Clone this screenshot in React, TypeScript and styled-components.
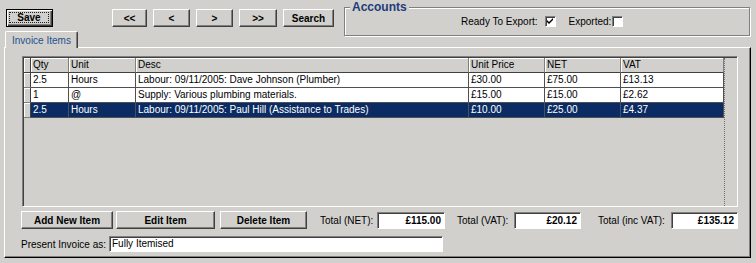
import styled, { createGlobalStyle } from 'styled-components';

const FACE = '#d1d0cd';
const FONT = '"Liberation Sans", Arial, sans-serif';

const GlobalStyle = createGlobalStyle`
  html, body {
    margin: 0;
    padding: 0;
    background: ${FACE};
  }
  body {
    font-family: ${FONT};
    font-size: 10px;
    color: #000;
  }
`;

type Item = {
  qty: string;
  unit: string;
  desc: string;
  price: string;
  net: string;
  vat: string;
};

const items: Item[] = [
  { qty: '2.5', unit: 'Hours', desc: 'Labour: 09/11/2005: Dave Johnson (Plumber)', price: '£30.00', net: '£75.00', vat: '£13.13' },
  { qty: '1', unit: '@', desc: 'Supply: Various plumbing materials.', price: '£15.00', net: '£15.00', vat: '£2.62' },
  { qty: '2.5', unit: 'Hours', desc: 'Labour: 09/11/2005: Paul Hill (Assistance to Trades)', price: '£10.00', net: '£25.00', vat: '£4.37' },
];

const COLS = '7px 38px 67px 333px 76px 76px 103px';

export default function App() {
  return (
    <Screen>
      <GlobalStyle />
      <TopBar>
        <SaveButton $w={47}>
          <FocusRect>Save</FocusRect>
        </SaveButton>
        <NavGroup>
          <Button $w={35}>&lt;&lt;</Button>
          <Button $w={37}>&lt;</Button>
          <Button $w={37}>&gt;</Button>
          <Button $w={38}>&gt;&gt;</Button>
          <Button $w={51}>Search</Button>
        </NavGroup>
        <GroupBox>
          <Legend>Accounts</Legend>
          <ChecksRow>
            <span>Ready To Export:</span>
            <CheckBox $gap={7}>
              <svg width="7" height="7" viewBox="0 0 7 7">
                <path d="M0 2 L2 4 L6 0 L6 2 L2 6 L0 4 Z" fill="#000" />
              </svg>
            </CheckBox>
            <ExportedLabel>Exported:</ExportedLabel>
            <CheckBox $gap={1} />
          </ChecksRow>
        </GroupBox>
      </TopBar>

      <TabStrip>
        <Tab>Invoice Items</Tab>
      </TabStrip>

      <Panel>
        <SheetFrame>
          <Sheet>
            <Columns>
              <Row>
                <HeadSelector />
                <HeadCell>Qty</HeadCell>
                <HeadCell>Unit</HeadCell>
                <HeadCell>Desc</HeadCell>
                <HeadCell>Unit Price</HeadCell>
                <HeadCell>NET</HeadCell>
                <HeadCell>VAT</HeadCell>
              </Row>
              {items.map((it, i) => {
                const sel = i === items.length - 1;
                return (
                  <Row key={i}>
                    <Selector />
                    <Cell $selected={sel}>{it.qty}</Cell>
                    <Cell $selected={sel}>{it.unit}</Cell>
                    <Cell $selected={sel}>{it.desc}</Cell>
                    <Cell $selected={sel}>{it.price}</Cell>
                    <Cell $selected={sel}>{it.net}</Cell>
                    <Cell $selected={sel}>{it.vat}</Cell>
                  </Row>
                );
              })}
            </Columns>
          </Sheet>
        </SheetFrame>

        <ActionRow>
          <Button $w={92} $ml={-1}>Add New Item</Button>
          <Button $w={99} $ml={3}>Edit Item</Button>
          <Button $w={87} $ml={5}>Delete Item</Button>
          <TotalGroup $w={125} $ml={13}>
            <span>Total (NET):</span>
            <TotalField $w={68}>£115.00</TotalField>
          </TotalGroup>
          <TotalGroup $w={124} $ml={12}>
            <span>Total (VAT):</span>
            <TotalField $w={67}>£20.12</TotalField>
          </TotalGroup>
          <TotalGroup $w={140} $ml={17}>
            <span>Total (inc VAT):</span>
            <TotalField $w={67}>£135.12</TotalField>
          </TotalGroup>
        </ActionRow>

        <PresentRow>
          <PresentLabel>Present Invoice as:</PresentLabel>
          <TextField>Fully Itemised</TextField>
        </PresentRow>
      </Panel>
    </Screen>
  );
}

const Screen = styled.div`
  width: 756px;
  height: 263px;
  background: ${FACE};
  overflow: hidden;
`;

const TopBar = styled.div`
  height: 31px;
  padding-left: 6px;
  display: flex;
  align-items: flex-start;
`;

const Button = styled.button<{ $w: number; $ml?: number }>`
  width: ${(p) => p.$w}px;
  height: 18px;
  margin-left: ${(p) => p.$ml ?? 0}px;
  padding: 0;
  box-sizing: border-box;
  flex-shrink: 0;
  font: bold 10px ${FONT};
  color: #000;
  background: ${FACE};
  border: 1px solid;
  border-color: #fff #404040 #404040 #fff;
  box-shadow: inset -1px -1px 0 #808080;
`;

const SaveButton = styled(Button)`
  margin-top: 9px;
  border: 1px solid #000;
  box-shadow: inset 1px 1px 0 #fff, inset -1px -1px 0 #404040,
    inset -2px -2px 0 #808080;
  display: flex;
  align-items: stretch;
`;

const FocusRect = styled.span`
  flex: 1;
  margin: 2px 3px 3px 2px;
  border: 1px dotted #202020;
  line-height: 10px;
`;

const NavGroup = styled.div`
  margin: 9px 0 0 59px;
  display: flex;
  gap: 6px;
`;

const GroupBox = styled.div`
  margin: 7px 0 0 10px;
  width: 406px;
  height: 29px;
  box-sizing: border-box;
  border: 1px solid #808080;
  box-shadow: 1px 1px 0 #fff, inset 1px 1px 0 #fff;
`;

const Legend = styled.div`
  width: fit-content;
  margin: -7px 0 0 5px;
  padding: 0 2px;
  background: ${FACE};
  font: bold 12px/13px ${FONT};
  color: #1e3c7b;
`;

const ChecksRow = styled.div`
  margin-top: 2px;
  padding-left: 116px;
  height: 11px;
  display: flex;
  align-items: center;
  line-height: 11px;
`;

const ExportedLabel = styled.span`
  margin-left: 13px;
`;

const CheckBox = styled.span<{ $gap: number }>`
  margin-left: ${(p) => p.$gap}px;
  width: 11px;
  height: 11px;
  box-sizing: border-box;
  background: #fff;
  border: 1px solid;
  border-color: #808080 #fff #fff #808080;
  box-shadow: inset 1px 1px 0 #404040;
  display: flex;
  align-items: center;
  justify-content: center;
`;

const TabStrip = styled.div`
  height: 16px;
  padding-left: 5px;
  display: flex;
`;

const Tab = styled.div`
  position: relative;
  z-index: 1;
  width: 73px;
  height: 17px;
  box-sizing: border-box;
  padding: 3px 0 0 6px;
  background: ${FACE};
  border-top: 1px solid #fff;
  border-left: 1px solid #fff;
  border-right: 1px solid #404040;
  border-top-left-radius: 2px;
  border-top-right-radius: 2px;
  box-shadow: inset -1px 0 0 #808080;
  color: #24508c;
  line-height: 11px;
`;

const Panel = styled.div`
  margin-left: 4px;
  width: 747px;
  height: 211px;
  box-sizing: border-box;
  padding: 8px 11px 0 17px;
  border-top: 1px solid #fff;
  border-left: 1px solid #fff;
  border-right: 1px solid #000;
  border-bottom: 1px solid #000;
  box-shadow: inset -1px -1px 0 #808080;
  display: flex;
  flex-direction: column;
`;

const SheetFrame = styled.div`
  width: 716px;
  height: 151px;
  box-sizing: border-box;
  border: 1px solid;
  border-color: #808080 #fff #fff #808080;
`;

const Sheet = styled.div`
  height: 100%;
  box-sizing: border-box;
  border-top: 1px solid #404040;
  border-left: 1px solid #404040;
  display: flex;
`;

const Columns = styled.div`
  width: 700px;
  border-right: 1px dotted #707070;
`;

const Row = styled.div`
  display: grid;
  grid-template-columns: ${COLS};
  height: 15px;
`;

const HeadSelector = styled.div`
  background: ${FACE};
  border-right: 1px solid #404040;
  border-bottom: 1px solid #404040;
  box-shadow: inset 1px 1px 0 #fff;
`;

const Selector = styled(HeadSelector)`
  border-bottom-color: #808080;
`;

const HeadCell = styled.div`
  padding-left: 2px;
  background: ${FACE};
  border-right: 1px solid #808080;
  border-bottom: 1px solid #404040;
  box-shadow: inset 1px 1px 0 #fff;
  line-height: 14px;
  white-space: nowrap;
  overflow: hidden;
`;

const Cell = styled.div<{ $selected?: boolean }>`
  padding-left: 2px;
  background: ${(p) => (p.$selected ? '#0a2b63' : '#fff')};
  color: ${(p) => (p.$selected ? '#fff' : '#000')};
  border-right: 1px solid #505050;
  border-bottom: 1px solid #505050;
  line-height: 14px;
  white-space: nowrap;
  overflow: hidden;
`;

const ActionRow = styled.div`
  margin-top: 4px;
  height: 18px;
  display: flex;
  align-items: center;
`;

const TotalGroup = styled.div<{ $w: number; $ml: number }>`
  width: ${(p) => p.$w}px;
  margin-left: ${(p) => p.$ml}px;
  display: flex;
  align-items: center;
  justify-content: space-between;
  white-space: nowrap;
`;

const Field = styled.div`
  box-sizing: border-box;
  background: #fff;
  border: 1px solid;
  border-color: #808080 #fff #fff #808080;
  box-shadow: inset 1px 1px 0 #404040;
  white-space: nowrap;
`;

const TotalField = styled(Field)<{ $w: number }>`
  width: ${(p) => p.$w}px;
  height: 17px;
  padding-right: 3px;
  text-align: right;
  font-weight: bold;
  line-height: 15px;
`;

const PresentRow = styled.div`
  margin-top: 7px;
  height: 16px;
  display: flex;
  align-items: center;
`;

const PresentLabel = styled.span`
  width: 88px;
  margin-left: -1px;
  flex-shrink: 0;
`;

const TextField = styled(Field)`
  width: 334px;
  height: 16px;
  padding-left: 2px;
  line-height: 14px;
`;
